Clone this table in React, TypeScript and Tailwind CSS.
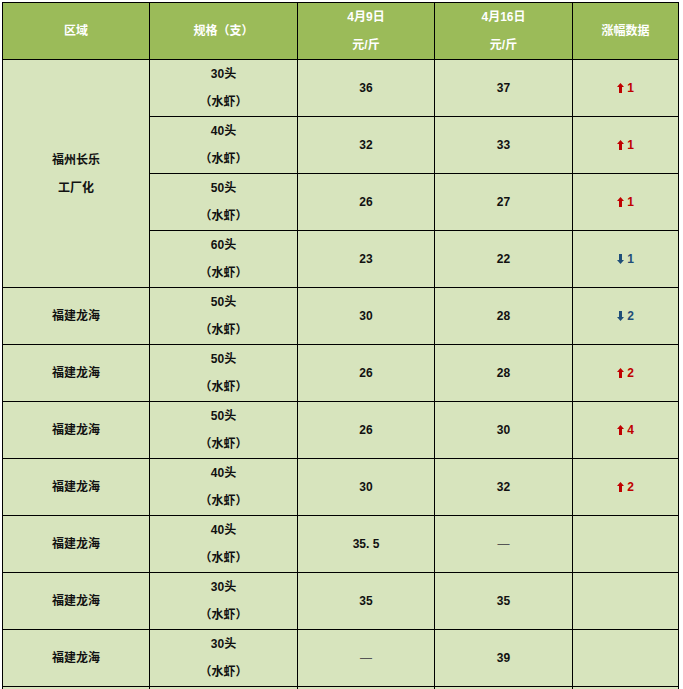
import React from "react";

type Row = {
  region?: string;
  spec: string;
  a: string;
  b: string;
  ch?: { dir: "up" | "down"; v: string };
};

const rows: Row[] = [
  { spec: "30头", a: "36", b: "37", ch: { dir: "up", v: "1" } },
  { spec: "40头", a: "32", b: "33", ch: { dir: "up", v: "1" } },
  { spec: "50头", a: "26", b: "27", ch: { dir: "up", v: "1" } },
  { spec: "60头", a: "23", b: "22", ch: { dir: "down", v: "1" } },
  { region: "福建龙海", spec: "50头", a: "30", b: "28", ch: { dir: "down", v: "2" } },
  { region: "福建龙海", spec: "50头", a: "26", b: "28", ch: { dir: "up", v: "2" } },
  { region: "福建龙海", spec: "50头", a: "26", b: "30", ch: { dir: "up", v: "4" } },
  { region: "福建龙海", spec: "40头", a: "30", b: "32", ch: { dir: "up", v: "2" } },
  { region: "福建龙海", spec: "40头", a: "35. 5", b: "—" },
  { region: "福建龙海", spec: "30头", a: "35", b: "35" },
  { region: "福建龙海", spec: "30头", a: "—", b: "39" },
];

const font = { fontFamily: '"Liberation Sans", "Noto Sans CJK SC", sans-serif' };

function Arrow({ dir }: { dir: "up" | "down" }) {
  const color = dir === "up" ? "#c00000" : "#1f4e79";
  return (
    <svg width="7" height="10" viewBox="0 0 7 10" className="block">
      {dir === "up" ? (
        <path d="M3.5 0 L7 4 L5 4 L5 10 L2 10 L2 4 L0 4 Z" fill={color} />
      ) : (
        <path d="M3.5 10 L7 6 L5 6 L5 0 L2 0 L2 6 L0 6 Z" fill={color} />
      )}
    </svg>
  );
}

function Cell({ children, className = "" }: { children?: React.ReactNode; className?: string }) {
  return (
    <div className={`bg-[#d7e4bd] flex flex-col items-center justify-center text-[12px] font-bold text-[#111] leading-[28px] ${className}`}>
      {children}
    </div>
  );
}

function Dash() {
  return <span className="text-[#555] font-normal">—</span>;
}

export default function App() {
  return (
    <div className="w-[683px] h-[689px] overflow-hidden bg-white" style={font}>
      <div className="ml-[2px] mt-[2px] w-[677px] grid grid-cols-[146px_147px_136px_137px_105px] auto-rows-[56px] gap-px p-px bg-black">
        <div className="bg-[#9bbb59] flex items-center justify-center text-white font-bold text-[12px]">区域</div>
        <div className="bg-[#9bbb59] flex items-center justify-center text-white font-bold text-[12px]">规格（支）</div>
        <div className="bg-[#9bbb59] flex flex-col items-center justify-center text-white font-bold text-[12px] leading-[28px]">
          <span>4月9日</span>
          <span>元/斤</span>
        </div>
        <div className="bg-[#9bbb59] flex flex-col items-center justify-center text-white font-bold text-[12px] leading-[28px]">
          <span>4月16日</span>
          <span>元/斤</span>
        </div>
        <div className="bg-[#9bbb59] flex items-center justify-center text-white font-bold text-[12px]">涨幅数据</div>

        <Cell className="row-span-4">
          <span>福州长乐</span>
          <span>工厂化</span>
        </Cell>
        {rows.map((r, i) => (
          <React.Fragment key={i}>
            {r.region && (
              <Cell>
                <span>{r.region}</span>
              </Cell>
            )}
            <Cell>
              <span>{r.spec}</span>
              <span>（水虾）</span>
            </Cell>
            <Cell>{r.a === "—" ? <Dash /> : <span>{r.a}</span>}</Cell>
            <Cell>{r.b === "—" ? <Dash /> : <span>{r.b}</span>}</Cell>
            <Cell>
              {r.ch && (
                <span className="flex items-center gap-[3px]" style={{ color: r.ch.dir === "up" ? "#c00000" : "#1f4e79" }}>
                  <Arrow dir={r.ch.dir} />
                  <span>{r.ch.v}</span>
                </span>
              )}
            </Cell>
          </React.Fragment>
        ))}
        <Cell />
        <Cell />
        <Cell />
        <Cell />
        <Cell />
      </div>
    </div>
  );
}
